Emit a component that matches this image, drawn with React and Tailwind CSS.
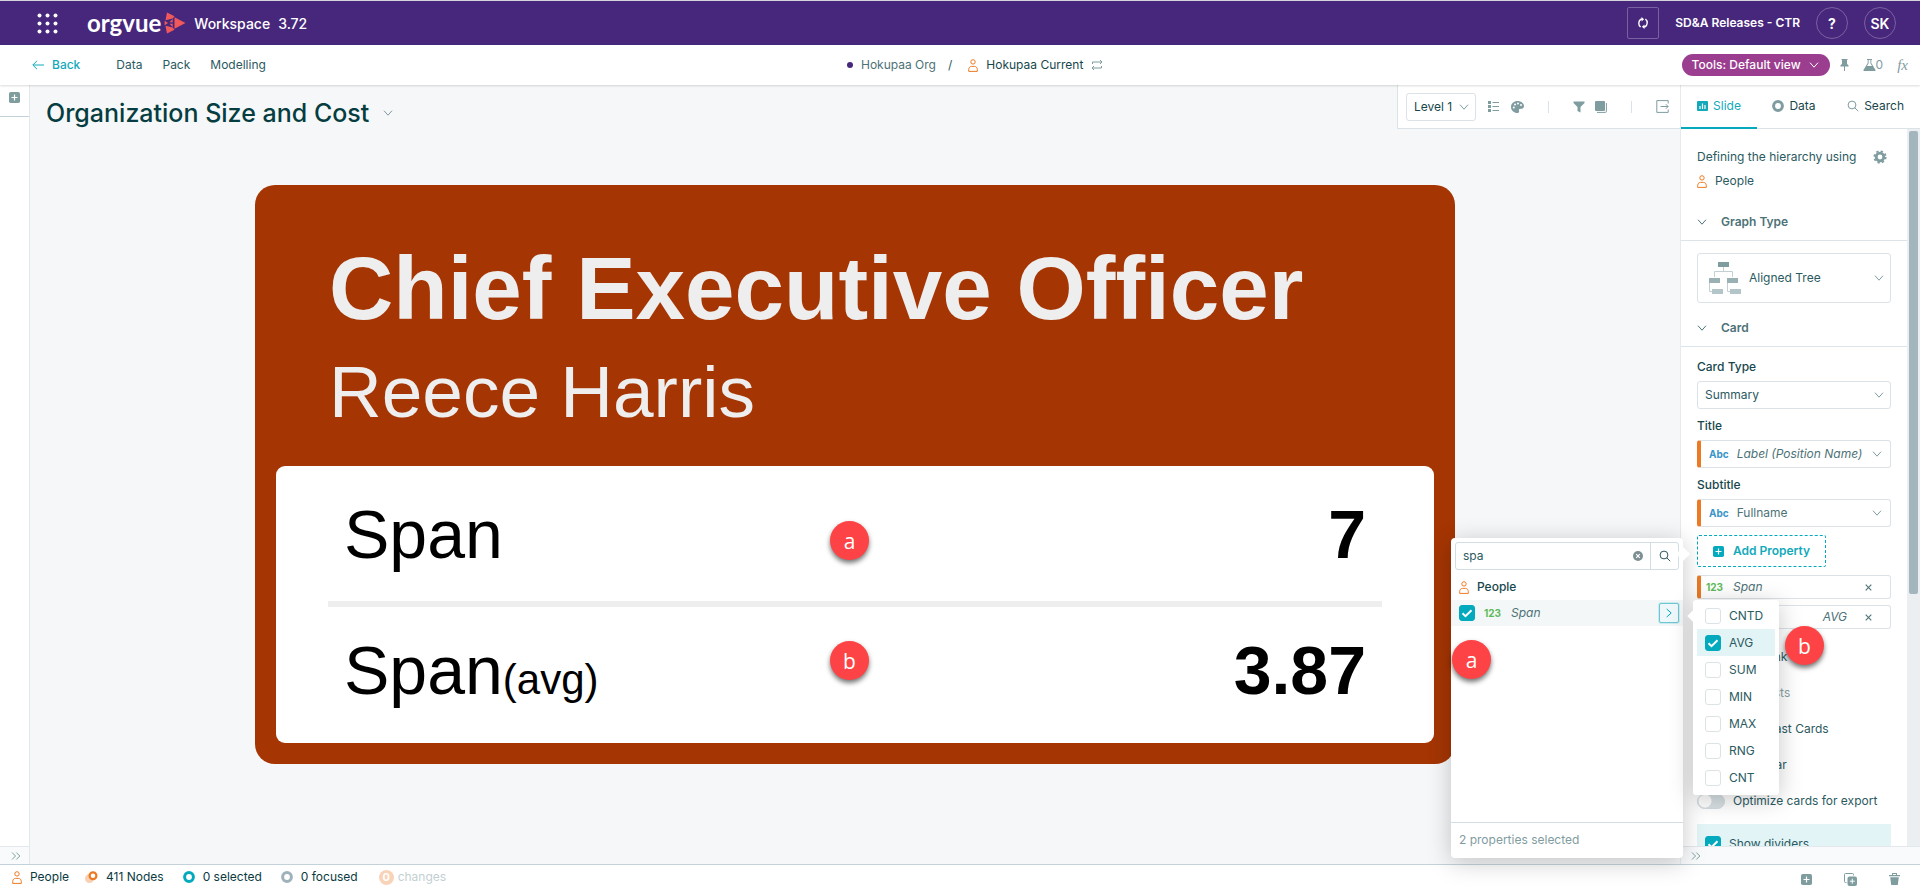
import React, { useState } from 'react';

/* ── Icons ── */
const Chevron = ({ className = '' }) => (
    <svg viewBox="0 0 10 6" className={`h-[6px] w-[10px] shrink-0 ${className}`} fill="none" stroke="currentColor" strokeWidth="1">
        <path d="M1 .7 5 5.2 9 .7" />
    </svg>
);

const Person = ({ className = '' }) => (
    <svg viewBox="0 0 10 13" className={`h-[13px] w-[10px] shrink-0 text-[#ec7a25] ${className}`} fill="none" stroke="currentColor" strokeWidth="1">
        <circle cx="5" cy="2.9" r="2.2" />
        <path d="M.7 12.4v-1.9c0-1.800 1.200-3.100 2.800-3.100h3c1.600 0 2.800 1.300 2.800 3.100v1.900z" />
    </svg>
);

const PlusBox = ({ className = '' }) => (
    <svg viewBox="0 0 11 11" className={`h-[11px] w-[11px] shrink-0 ${className}`}>
        <rect width="11" height="11" rx="1.8" fill="currentColor" />
        <path d="M5.5 2.5v6M2.5 5.5h6" stroke="#fff" strokeWidth="1.2" />
    </svg>
);

const Ring = ({ className = '' }) => (
    <svg viewBox="0 0 12 12" className={`h-[12px] w-[12px] shrink-0 ${className}`} fill="none" stroke="currentColor" strokeWidth="3">
        <circle cx="6" cy="6" r="4.4" />
    </svg>
);

const Magnifier = ({ className = '' }) => (
    <svg viewBox="0 0 12 12" className={`h-[12px] w-[12px] shrink-0 ${className}`} fill="none" stroke="currentColor">
        <circle cx="5" cy="5" r="3.9" />
        <path d="m7.8 7.8 3.4 3.4" />
    </svg>
);

const DoubleChevron = () => (
    <svg viewBox="0 0 10 8" className="h-[8px] w-[10px] text-[#7f9c9f]" fill="none" stroke="currentColor" strokeWidth="1">
        <path d="M1 .5 4.5 4 1 7.5M5.3.5 8.8 4 5.3 7.5" />
    </svg>
);

const Cross = () => (
    <svg viewBox="0 0 7 7" className="h-[7px] w-[7px]" fill="none" stroke="currentColor" strokeWidth="1.1">
        <path d="m.7.7 5.6 5.6M6.3.7.7 6.3" />
    </svg>
);

/* ── Small parts ── */
const Check = ({ id, checked, onChange }) => (
    <span className="grid h-4 w-4 shrink-0">
        <input
            id={id}
            type="checkbox"
            checked={checked}
            onChange={onChange}
            className="col-start-1 row-start-1 h-4 w-4 appearance-none rounded-[3px] border border-[#dbe3e7] bg-white checked:border-[#03a9bd] checked:bg-[#03a9bd]"
        />
        {checked && (
            <svg viewBox="0 0 16 16" className="pointer-events-none col-start-1 row-start-1 h-4 w-4" fill="none" stroke="#fff" strokeWidth="2">
                <path d="m3.5 8.2 3 3 6-6" />
            </svg>
        )}
    </span>
);

const Badge = ({ children, className }) => (
    <span className={`absolute z-30 flex h-[39px] w-[39px] items-center justify-center rounded-full bg-[#fd4345] font-['Open_Sans',sans-serif] text-[21px] leading-6 text-white shadow-[0_3px_5px_rgba(0,0,0,0.55)] ${className}`}>
        {children}
    </span>
);

const Section = ({ children }) => (
    <h3 className="flex h-[37px] items-center gap-[14px] border-b border-[#dde4e9] px-4 font-semibold text-[#4d7277]">
        <Chevron className="text-[#4d7277]" />
        {children}
    </h3>
);

const Field = ({ id, label, type, value, italic }) => (
    <div className="flex flex-col">
        <label htmlFor={id} className="mb-[6px] leading-4 font-medium text-[#17474c]">{label}</label>
        <div className={`flex h-7 items-center rounded-[3px] border border-[#dbe2e8] ${type ? 'border-l-4 border-l-[#ec7a25] pr-2 pl-2' : 'pr-[6px] pl-[7px]'}`}>
            {type && <span className="mr-2 text-[10px] font-bold text-[#3a94c9]">{type}</span>}
            <select id={id} className={`min-w-0 flex-1 appearance-none bg-transparent outline-none ${italic ? 'italic' : ''} ${type ? 'text-[#4d7277]' : ''}`}>
                <option>{value}</option>
            </select>
            <Chevron className="text-[#7f9c9f]" />
        </div>
    </div>
);

const Property = ({ name, suffix }) => (
    <div className="flex h-6 items-center rounded-[3px] border border-l-4 border-[#dbe2e8] border-l-[#ec7a25] pl-[5px] pr-[18px] text-[#4d7277] italic">
        <span className="mr-[10px] text-[10px] font-bold text-[#5dba5a] not-italic">123</span>
        {name}
        <span className="mr-[18px] ml-auto">{suffix}</span>
        <button type="button" aria-label={`Remove ${name}`}><Cross /></button>
    </div>
);

const Toggle = ({ id, label, muted }) => (
    <label htmlFor={id} className={`flex h-9 items-center gap-2 whitespace-nowrap ${muted ? 'text-[#8aa2a5]' : ''}`}>
        <input
            id={id}
            type="checkbox"
            role="switch"
            className="h-[15px] w-7 shrink-0 appearance-none rounded-full border border-[#d3dbe0] bg-[#d8e0e4] bg-[radial-gradient(circle_at_7px_6px,#fff_6px,transparent_7px)]"
        />
        {label}
    </label>
);

/* ── Header ── */
const Header = () => (
    <header className="flex h-[45px] shrink-0 items-center border-t border-[#d4d4dc] bg-[#47277c] pr-6 pl-[37px] text-white">
        <button type="button" aria-label="Apps">
            <svg viewBox="0 0 21 21" className="h-[21px] w-[21px]" fill="#fff">
                {[2.5, 10.5, 18.5].map((y) => [2.5, 10.5, 18.5].map((x) => <circle key={`${x}-${y}`} cx={x} cy={y} r="2" />))}
            </svg>
        </button>
        <a href="#home" className="ml-[29px] flex items-center gap-[3px]">
            <span className="font-['Lato',sans-serif] text-[24px] leading-6 font-bold">orgvue</span>
            <svg viewBox="0 0 22 22" className="h-[22px] w-[22px]" fill="#f0595b">
                <path d="M3 .5 10.500 4.300 8.800 6.400 1.500 8.200z" />
                <path d="M3 21.500 10.500 17.700 8.800 15.600 1.500 13.800z" />
                <path d="M.6 8.800 4 11 .6 13.200z" />
                <path d="M8.700 7 5.500 10.300h3.200zM8.700 15 5.500 11.700h3.200z" />
                <path d="M10.500 5.200 21.500 11 10.500 16.800z" />
            </svg>
        </a>
        <span className="ml-2 text-[14px] font-medium">Workspace</span>
        <span className="ml-2 text-[14px] font-medium">3.72</span>
        <div className="ml-auto flex items-center gap-4">
            <button type="button" aria-label="Refresh" className="flex h-8 w-8 items-center justify-center rounded-[2px] border border-[#7960a0]">
                <svg viewBox="0 0 12 12" className="h-[12px] w-[12px]" fill="none" stroke="#fff" strokeWidth="1.4">
                    <path d="M3.600 10A4.800 4.800 0 0 1 4 2.200h1M8.400 2A4.800 4.800 0 0 1 8 9.800H7" />
                    <path d="M4.500 0v4.400L7.100 2.200zM7.500 7.600V12L4.900 9.800z" fill="#fff" stroke="none" />
                </svg>
            </button>
            <span className="font-semibold">SD&amp;A Releases - CTR</span>
            <button type="button" className="h-8 w-8 rounded-full border border-[#7960a0] text-[14px] font-bold">?</button>
            <button type="button" className="h-8 w-8 rounded-full border border-[#7960a0] text-[14px] font-semibold">SK</button>
        </div>
    </header>
);

const NavBar = () => (
    <nav className="relative z-10 flex h-10 shrink-0 items-center bg-white pr-3 pl-8 text-[#2b5a5f] shadow-[0_1px_2px_rgba(0,0,0,0.15)]">
        <div className="flex w-[815px] items-center">
            <a href="#back" className="flex items-center gap-2 font-medium text-[#12a9bb]">
                <svg viewBox="0 0 12 10" className="h-[10px] w-[12px]" fill="none" stroke="currentColor">
                    <path d="M12 5H1M5 .8.8 5 5 9.2" />
                </svg>
                Back
            </a>
            <a href="#data" className="ml-9">Data</a>
            <a href="#pack" className="ml-5">Pack</a>
            <a href="#modelling" className="ml-5">Modelling</a>
        </div>
        <div className="flex items-center">
            <span className="mr-2 h-[6px] w-[6px] rounded-full bg-[#47277c]" />
            <a href="#org" className="text-[#4d7277]">Hokupaa Org</a>
            <span className="mx-3">/</span>
            <Person className="mr-2 ml-1" />
            <a href="#current" className="text-[#17474c]">Hokupaa Current</a>
            <svg viewBox="0 0 12 10" className="ml-2 h-[10px] w-[12px] text-[#7f9c9f]" fill="none" stroke="currentColor">
                <path d="M1.500 4V2h9M9 0l2 2-2 2M10.500 6v2h-9M3 6 1 8l2 2" />
            </svg>
        </div>
        <div className="ml-auto flex items-center text-[#7f9c9f]">
            <button type="button" className="flex h-[22px] items-center gap-2 rounded-full bg-[#9b3e90] pr-[11px] pl-[10px] font-medium text-white">
                Tools: Default view <Chevron />
            </button>
            <button type="button" aria-label="Pin" className="ml-[10px]">
                <svg viewBox="0 0 9 12" className="h-[12px] w-[9px]" fill="currentColor">
                    <path d="M1.500 0h6v1H7v4l1.500 1.200V7.500H5V12H4V7.500H.5V6.200L2 5V1h-.5z" />
                </svg>
            </button>
            <button type="button" className="ml-[14px] flex items-center">
                <svg viewBox="0 0 13 12" className="h-[12px] w-[13px]" fill="currentColor">
                    <path d="M4 0h5v1h-.7v3l4.400 7.200-.5.8H.8l-.5-.8L4.700 4V1H4zm1.600 1v3.300L4 7h5L7.400 4.300V1z" fillRule="evenodd" />
                </svg>
                0
            </button>
            <button type="button" className="ml-[14px] font-['Liberation_Serif',serif] text-[15px] leading-4 italic">fx</button>
        </div>
    </nav>
);

/* ── Canvas ── */
const Toolbar = () => (
    <div className="flex h-[44px] w-[283px] items-center border-b border-l border-[#dbe2e8] bg-white pl-2 text-[#7f9c9f]">
        <div className="flex h-7 w-[70px] items-center rounded-[3px] border border-[#dbe2e8] pr-[6px] pl-[7px]">
            <select aria-label="Level" className="min-w-0 flex-1 appearance-none bg-transparent text-[#17474c] outline-none">
                <option>Level 1</option>
            </select>
            <Chevron />
        </div>
        <button type="button" aria-label="List" className="ml-3">
            <svg viewBox="0 0 11 11" className="h-[11px] w-[11px]" fill="currentColor">
                <path d="M0 0h3v3H0zM0 4h3v3H0zM0 8h3v3H0zM4.500 1H11v1H4.500zM4.500 5H11v1H4.500zM4.500 9H11v1H4.500z" />
            </svg>
        </button>
        <button type="button" aria-label="Colours" className="ml-3">
            <svg viewBox="0 0 13 12" className="h-[12px] w-[13px]">
                <path d="M6.500 0C10 0 13 2.200 13 5c0 2-1.500 2.800-3 2.800-1.800 0-2.500.8-2 2 .4 1.200 0 2.200-1.500 2.200C3 12 0 9.500 0 6s3-6 6.500-6z" fill="currentColor" />
                <g fill="#fff">
                    <circle cx="2.800" cy="6.500" r="1" />
                    <circle cx="4" cy="3.500" r="1" />
                    <circle cx="7" cy="2.400" r="1" />
                    <circle cx="10" cy="4" r="1" />
                </g>
            </svg>
        </button>
        <span className="ml-6 h-3 w-px bg-[#dbe2e8]" />
        <button type="button" aria-label="Filter" className="ml-6">
            <svg viewBox="0 0 12 12" className="h-[12px] w-[12px]" fill="currentColor">
                <path d="M.5.500h11v1.500L7.500 6v5.500l-3-1.500V6L.5 2z" />
            </svg>
        </button>
        <button type="button" aria-label="Layers" className="ml-[10px]">
            <svg viewBox="0 0 12 12" className="h-[12px] w-[12px]">
                <rect width="10" height="10" rx="1" fill="currentColor" />
                <path d="M11.400 2v8.400a1 1 0 0 1-1 1H2" fill="none" stroke="currentColor" />
            </svg>
        </button>
        <span className="ml-6 h-3 w-px bg-[#dbe2e8]" />
        <button type="button" aria-label="Export" className="ml-6">
            <svg viewBox="0 0 13 13" className="h-[13px] w-[13px]" fill="none" stroke="currentColor">
                <path d="M12.200 3.500V.6H.8v11.800h11.400V9.500M4.500 6.500h7.500M9.800 4.200l2.300 2.300-2.300 2.300" />
            </svg>
        </button>
    </div>
);

const Canvas = () => (
    <main className="flex min-w-0 flex-1 flex-col bg-[#f5f7f9]">
        <div className="flex items-start">
            <h1 className="mt-[10px] ml-4 flex items-center gap-[14px] text-[25px] leading-9 font-medium text-[#053d40]">
                Organization Size and Cost
                <Chevron className="text-[#7f9c9f]" />
            </h1>
            <div className="ml-auto">
                <Toolbar />
            </div>
        </div>
        <div className="mx-auto mt-[54px] w-full max-w-[1200px] rounded-[20px] bg-[#a53503] px-[21px] pb-[21px] font-['Liberation_Sans',Arial,sans-serif]">
            <div className="px-[53px] pt-[58px] pb-8 text-[#eee]">
                <h2 className="text-[89px] leading-[90px] font-bold">Chief Executive Officer</h2>
                <p className="mt-[16px] text-[73px] leading-[85px]">Reece Harris</p>
            </div>
            <div className="relative rounded-[9px] bg-white px-[52px] text-[68px] leading-[80px] text-black">
                <dl>
                    <div className="flex items-baseline justify-between border-b-[6px] border-[#eee] px-4 pt-7 pb-[27px]">
                        <dt>Span</dt>
                        <dd className="font-bold">7</dd>
                    </div>
                    <div className="flex items-baseline justify-between px-4 pt-[23px] pb-[33px]">
                        <dt>Span<span className="text-[42px] leading-none">(avg)</span></dt>
                        <dd className="font-bold">3.87</dd>
                    </div>
                </dl>
                <Badge className="top-[55px] left-[554px]">a</Badge>
                <Badge className="top-[175px] left-[554px]">b</Badge>
            </div>
        </div>
    </main>
);

/* ── Property picker and its aggregate menu ── */
const PropertyPicker = () => {
    const [query, setQuery] = useState('spa');
    const [picked, setPicked] = useState(true);

    return (
        <div className="absolute top-[453px] right-[237px] z-20 flex h-[320px] w-[232px] flex-col rounded-[4px] bg-white shadow-[0_4px_24px_rgba(0,0,0,0.22)]">
            <span className="absolute top-[11px] -right-[5px] h-[10px] w-[10px] rotate-45 bg-white" />
            <div className="mx-1 mt-1 flex h-7 items-center rounded-[3px] border border-[#d3dde4]">
                <input
                    aria-label="Search properties"
                    value={query}
                    onChange={(e) => setQuery(e.target.value)}
                    className="min-w-0 flex-1 pl-[7px] outline-none"
                />
                <button type="button" aria-label="Clear" onClick={() => setQuery('')} className="mr-[7px]">
                    <svg viewBox="0 0 10 10" className="h-[10px] w-[10px]">
                        <circle cx="5" cy="5" r="5" fill="#7d8f95" />
                        <path d="m3.200 3.200 3.600 3.600M6.800 3.200 3.200 6.800" stroke="#fff" strokeWidth="1.200" />
                    </svg>
                </button>
                <button type="button" aria-label="Search" className="flex h-full w-7 items-center justify-center border-l border-[#d3dde4]">
                    <Magnifier />
                </button>
            </div>
            <h4 className="flex h-[30px] items-center gap-2 pt-[4px] pl-2 font-medium text-[#17474c]">
                <Person /> People
            </h4>
            <div className="flex h-[26px] items-center bg-[#f4f7f7] pr-1 pl-2">
                <Check id="pick-span" checked={picked} onChange={() => setPicked(!picked)} />
                <span className="ml-[9px] text-[10px] font-bold text-[#5dba5a]">123</span>
                <label htmlFor="pick-span" className="ml-[10px] text-[#4d7277] italic">Span</label>
                <button type="button" aria-label="Aggregates" className="ml-auto flex h-5 w-5 items-center justify-center rounded-[2px] border border-[#6ec6d0] bg-[#eef7f9] text-[#03a9bd] shadow-[0_0_0_1px_#cdebef]">
                    <Chevron className="-rotate-90" />
                </button>
            </div>
            <p className="mt-auto border-t border-[#d3dde4] px-2 pt-[9px] pb-[10px] leading-4 text-[#7f9c9f]">2 properties selected</p>
            <Badge className="top-[102px] left-px">a</Badge>
        </div>
    );
};

const AGGREGATES = ['CNTD', 'AVG', 'SUM', 'MIN', 'MAX', 'RNG', 'CNT'];

const AggregateMenu = () => {
    const [active, setActive] = useState(['AVG']);
    const toggle = (name) => setActive(active.includes(name) ? active.filter((n) => n !== name) : [...active, name]);

    return (
        <div className="absolute top-[515px] left-3 z-20 w-[86px] rounded-[3px] bg-white px-1 pt-[2px] pb-1 shadow-[0_4px_24px_rgba(0,0,0,0.22)]">
            <span className="absolute top-[12px] -left-[4px] h-[8px] w-[8px] rotate-45 bg-white" />
            {AGGREGATES.map((name) => (
                <label key={name} htmlFor={`agg-${name}`} className={`relative flex h-[27px] items-center gap-2 pl-2 ${active.includes(name) ? 'bg-[#e3f4f7]' : ''}`}>
                    <Check id={`agg-${name}`} checked={active.includes(name)} onChange={() => toggle(name)} />
                    {name}
                </label>
            ))}
            <Badge className="top-[26px] left-[92px]">b</Badge>
        </div>
    );
};

/* ── Right panel ── */
const SidePanel = () => {
    const [dividers, setDividers] = useState(true);

    return (
        <aside className="relative flex w-[240px] shrink-0 flex-col border-l border-[#e6eaee] bg-white">
            <div className="flex h-[44px] shrink-0 border-b border-[#dbe2e8] pb-px text-[#17474c]">
                <button type="button" className="-mb-[2px] flex w-[76px] items-center justify-center gap-[5px] border-b-2 border-[#03a9bd] text-[#12a9bb]">
                    <svg viewBox="0 0 11 10" className="h-[10px] w-[11px]">
                        <rect width="11" height="10" rx="1" fill="currentColor" />
                        <path d="M3 8V5M5.500 8V2.500M8 8V4" stroke="#fff" strokeWidth="1.200" />
                    </svg>
                    Slide
                </button>
                <button type="button" className="flex w-[74px] items-center justify-center gap-[5px] pb-px">
                    <Ring className="text-[#7f9c9f]" /> Data
                </button>
                <button type="button" className="flex flex-1 items-center justify-end gap-[5px] pr-4 pb-px">
                    <Magnifier className="text-[#7f9c9f]" /> Search
                </button>
            </div>

            <div className="flex min-h-0 flex-1">
                <div className="min-w-0 flex-1 overflow-hidden">
                    <div className="px-4 pt-5">
                        <div className="flex h-4 items-center justify-between pr-1">
                            Defining the hierarchy using
                            <button type="button" aria-label="Settings">
                                <svg viewBox="0 0 14 14" className="h-[14px] w-[14px] text-[#7f9c9f]" fill="none" stroke="currentColor">
                                    <circle cx="7" cy="7" r="3.800" strokeWidth="2.800" />
                                    <circle cx="7" cy="7" r="5.700" strokeWidth="1.800" strokeDasharray="2.300 2.177" />
                                </svg>
                            </button>
                        </div>
                        <p className="mt-2 flex h-4 items-center gap-2"><Person /> People</p>
                    </div>
                    <div className="mt-[15px]"><Section>Graph Type</Section></div>
                    <div className="mx-4 mt-3 mb-[7px] flex h-[50px] items-center rounded-[3px] border border-[#dbe2e8] pr-[6px] pl-[11px]">
                        <svg viewBox="0 0 32 32" className="h-8 w-8 shrink-0">
                            <path d="M14.500 5v5M5.500 15v-5.500h18V15M.5 20v9.500H3M18.500 20v9.500H21" fill="none" stroke="#c3d0d3" />
                            <path d="M9 0h11v5H9z" fill="#7f9c9f" />
                            <path d="M0 16h11v5H0zM18 16h11v5H18z" fill="#9ab1b4" />
                            <path d="M3 27h11v5H3zM21 27h11v5H21z" fill="#b3c5c8" />
                        </svg>
                        <select aria-label="Graph type" className="ml-2 min-w-0 flex-1 appearance-none bg-transparent outline-none">
                            <option>Aligned Tree</option>
                        </select>
                        <Chevron className="text-[#7f9c9f]" />
                    </div>
                    <Section>Card</Section>
                    <div className="flex flex-col gap-[9px] px-4 pt-3">
                        <Field id="card-type" label="Card Type" value="Summary" />
                        <Field id="title" label="Title" type="Abc" value="Label (Position Name)" italic />
                        <Field id="subtitle" label="Subtitle" type="Abc" value="Fullname" />
                    </div>
                    <div className="px-4 pt-2">
                        <button type="button" className="flex h-8 w-[129px] items-center justify-center gap-[9px] rounded-[2px] border border-dashed border-[#03a9bd] font-semibold text-[#12a9bb]">
                            <PlusBox className="text-[#03a9bd]" /> Add Property
                        </button>
                        <div className="mt-2 flex flex-col gap-[6px]">
                            <Property name="Span" />
                            <Property name="Span" suffix="AVG" />
                        </div>
                        <div className="mt-[10px]">
                            <Toggle id="link" label="Show link" />
                            <Toggle id="lists" label="Show lists" muted />
                            <Toggle id="cards" label="Show Last Cards" />
                            <Toggle id="bar" label="Show bar" />
                            <Toggle id="export" label="Optimize cards for export" />
                        </div>
                        <label htmlFor="dividers" className="mt-[5px] flex h-10 items-center gap-2 bg-[#e3f4f7] pl-2">
                            <Check id="dividers" checked={dividers} onChange={() => setDividers(!dividers)} />
                            Show dividers
                        </label>
                    </div>
                </div>
                <div className="w-[13px] shrink-0 bg-[#ebeff2] px-[2px] pt-[2px]">
                    <div className="h-[463px] rounded-[2px] bg-[#a3b6be]" />
                </div>
            </div>
            <button type="button" aria-label="Collapse panel" className="flex h-[18px] shrink-0 items-center border-t border-[#e3e8ec] bg-[#f9fafc] pl-[10px]">
                <DoubleChevron />
            </button>

            <PropertyPicker />
            <AggregateMenu />
        </aside>
    );
};

const StatusBar = () => (
    <footer className="flex h-[29px] shrink-0 items-center border-t border-[#c3d2da] bg-white pr-5 pb-1 pl-3 text-[#0b3a3f]">
        <Person className="mr-2" /> People
        <svg viewBox="0 0 13 12" className="mr-2 ml-4 h-[12px] w-[13px]" fill="none" strokeWidth="2.200">
            <circle cx="4.500" cy="7.500" r="3.400" fill="#f9d0b3" stroke="#f9d0b3" />
            <circle cx="8" cy="4.800" r="3.400" fill="#fff" stroke="#ec7a25" />
        </svg>
        411 Nodes
        <Ring className="mr-2 ml-[19px] text-[#03a9bd]" /> 0 selected
        <Ring className="mr-2 ml-[19px] text-[#9fb2ba]" /> 0 focused
        <span className="mr-1 ml-[21px] flex h-[15px] w-[15px] items-center justify-center rounded-full bg-[#f9d3b8] text-[11px] font-bold text-white">0</span>
        <span className="text-[#c3d0d2]">changes</span>
        <div className="mt-1 ml-auto flex items-center gap-8 text-[#7f9c9f]">
            <button type="button" aria-label="Add"><PlusBox /></button>
            <button type="button" aria-label="Duplicate">
                <svg viewBox="0 0 13 13" className="h-[13px] w-[13px]">
                    <path d="M2.500 9.500h-1a1 1 0 0 1-1-1v-7a1 1 0 0 1 1-1h7a1 1 0 0 1 1 1v1" fill="none" stroke="currentColor" />
                    <rect x="3.500" y="3.500" width="9.500" height="9.500" rx="2" fill="currentColor" />
                    <path d="M8.250 5.700v5M5.750 8.200h5" stroke="#fff" />
                </svg>
            </button>
            <button type="button" aria-label="Delete">
                <svg viewBox="0 0 11 12" className="h-[12px] w-[11px]" fill="currentColor">
                    <path d="M3 0h5v2h3v1.200H0V2h3zm1 1v1h3V1zM1.200 4.300h8.600L8.800 12H2.200z" fillRule="evenodd" />
                </svg>
            </button>
        </div>
    </footer>
);

const App = () => (
    <div className="flex h-screen min-h-[893px] flex-col overflow-hidden bg-white font-['Inter',sans-serif] text-[12px] text-[#2b5a5f]">
        <Header />
        <NavBar />
        <div className="flex min-h-0 flex-1">
            <div className="flex w-[30px] shrink-0 flex-col border-r border-[#e3e8ec] bg-white">
                <button type="button" aria-label="Add slide" className="flex h-8 items-center border-b border-[#c3d2da] pr-[2px] pb-[6px] pl-[9px]">
                    <PlusBox className="text-[#7f9c9f]" />
                </button>
                <button type="button" aria-label="Expand" className="mt-auto flex h-[18px] items-center border-t border-[#e3e8ec] bg-[#f9fafc] pl-[11px]">
                    <DoubleChevron />
                </button>
            </div>
            <Canvas />
            <SidePanel />
        </div>
        <StatusBar />
    </div>
);

export default App;
